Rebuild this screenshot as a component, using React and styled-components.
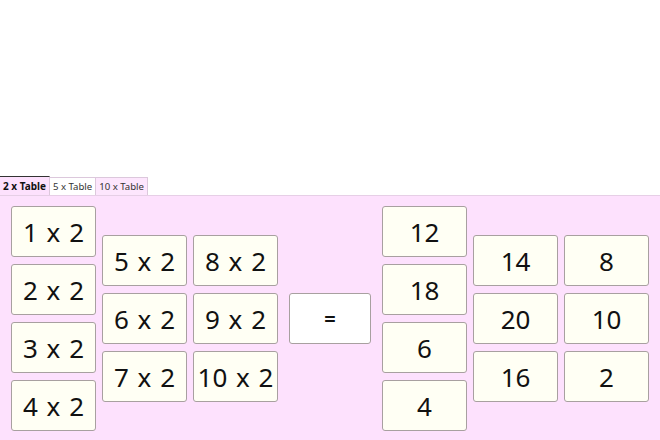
import React from "react";
import styled, { createGlobalStyle } from "styled-components";

const Global = createGlobalStyle`
  html, body { margin: 0; padding: 0; background: #ffffff; }
  body { font-family: "Noto Sans", "Open Sans", sans-serif; overflow: hidden; }
`;

const Page = styled.div`
  width: 660px;
  height: 440px;
  padding-top: 176px;
  box-sizing: border-box;
  overflow: hidden;
`;

const TabBar = styled.div`
  display: flex;
  align-items: flex-end;
  height: 19px;
`;

const Tab = styled.div`
  height: ${(p) => (p.$active ? "19px" : "18px")};
  box-sizing: border-box;
  padding: 0 3px;
  display: flex;
  align-items: center;
  font-size: ${(p) => (p.$active ? "10px" : "9.6px")};
  font-weight: ${(p) => (p.$active ? 700 : 400)};
  color: ${(p) => (p.$active ? "#111" : "#333")};
  background: ${(p) => p.$bg};
  border: 1px solid #dcc8dc;
  border-top: ${(p) => (p.$active ? "1px solid #333" : "1px solid #dcc8dc")};
  border-bottom: none;
  border-left: ${(p) => (p.$first ? "none" : "1px solid #dcc8dc")};
  margin-left: ${(p) => (p.$first ? "0" : "-1px")};
  position: relative;
  z-index: ${(p) => (p.$active ? 1 : 0)};
`;

const Panel = styled.div`
  background: #fde1fd;
  border-top: 1px solid #e6cfe6;
  padding: 10px 11px 12px;
  display: flex;
  align-items: center;
  gap: 11px;
`;

const Side = styled.div`
  display: flex;
  align-items: center;
  gap: 6px;
`;

const Column = styled.div`
  display: flex;
  flex-direction: column;
  gap: 7px;
`;

const Grid = styled.div`
  display: grid;
  grid-template-columns: repeat(2, 85px);
  column-gap: 6px;
  row-gap: 7px;
`;

const Card = styled.div`
  width: 85px;
  height: 51px;
  box-sizing: border-box;
  background: #fffff4;
  border: 1px solid #a8a0a0;
  border-radius: 3px;
  display: flex;
  align-items: center;
  justify-content: center;
  font-size: 26px;
  color: #111;
  white-space: pre;
  word-spacing: 2px;
`;

const Equals = styled.div`
  width: 82px;
  height: 51px;
  box-sizing: border-box;
  background: #ffffff;
  border: 1px solid #a8a0a0;
  border-radius: 3px;
  display: flex;
  align-items: center;
  justify-content: center;
  font-size: 20px;
  font-weight: 700;
  color: #111;
`;

const leftCol = ["1 x 2", "2 x 2", "3 x 2", "4 x 2"];
const leftGrid = ["5 x 2", "8 x 2", "6 x 2", "9 x 2", "7 x 2", "10 x 2"];
const rightCol = ["12", "18", "6", "4"];
const rightGrid = ["14", "8", "20", "10", "16", "2"];

export default function App() {
  return (
    <>
      <Global />
      <Page>
        <TabBar>
          <Tab $active $first $bg="#fde1fd">2 x Table</Tab>
          <Tab $bg="#ffffff">5 x Table</Tab>
          <Tab $bg="#fde6fd">10 x Table</Tab>
        </TabBar>
        <Panel>
          <Side>
            <Column>
              {leftCol.map((t) => (
                <Card key={t}>{t}</Card>
              ))}
            </Column>
            <Grid>
              {leftGrid.map((t) => (
                <Card key={t}>{t}</Card>
              ))}
            </Grid>
          </Side>
          <Equals>=</Equals>
          <Side>
            <Column>
              {rightCol.map((t) => (
                <Card key={t}>{t}</Card>
              ))}
            </Column>
            <Grid>
              {rightGrid.map((t) => (
                <Card key={t}>{t}</Card>
              ))}
            </Grid>
          </Side>
        </Panel>
      </Page>
    </>
  );
}
